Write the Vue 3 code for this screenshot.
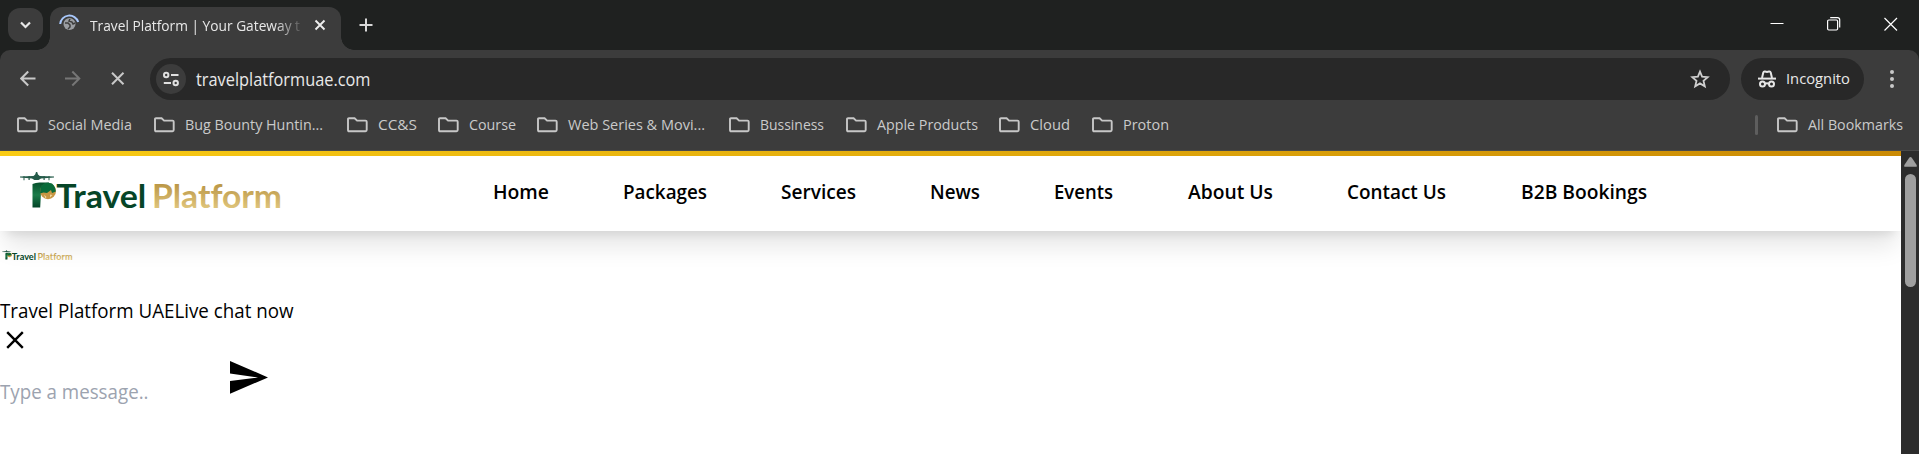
<script setup>
import { h } from 'vue'

// Single-line label fitted to an exact advance width.
const FitText = (props) =>
  h('svg', { width: props.w, height: 24, overflow: 'visible', style: { display: 'block', flex: 'none' } }, [
    h('text', {
      x: 0, y: 18, 'font-size': props.size, fill: 'currentColor',
      textLength: props.w, lengthAdjust: 'spacingAndGlyphs'
    }, props.text)
  ])
FitText.props = ['text', 'w', 'size']

const bookmarks = [
  { name: 'Social Media', w: 84, cell: 137 },
  { name: 'Bug Bounty Huntin...', w: 138, cell: 193 },
  { name: 'CC&S', w: 39, cell: 91 },
  { name: 'Course', w: 47, cell: 99 },
  { name: 'Web Series & Movi...', w: 137, cell: 192 },
  { name: 'Bussiness', w: 64, cell: 117 },
  { name: 'Apple Products', w: 101, cell: 153 },
  { name: 'Cloud', w: 40, cell: 93 },
  { name: 'Proton', w: 46, cell: 100 }
]

const links = [
  { name: 'Home', w: 56, cell: 130 },
  { name: 'Packages', w: 84, cell: 158.5 },
  { name: 'Services', w: 75, cell: 148.5 },
  { name: 'News', w: 50, cell: 124.5 },
  { name: 'Events', w: 59, cell: 134 },
  { name: 'About Us', w: 85, cell: 159 },
  { name: 'Contact Us', w: 99, cell: 173.5 },
  { name: 'B2B Bookings', w: 126, cell: 130 }
]

const logos = [
  { id: 'big', cls: 'logo-big' },
  { id: 'small', cls: 'logo-small' }
]
</script>

<template>
  <div class="browser">
    <header class="tabs">
      <button class="tab-search">
        <svg width="35" height="34" fill="none" stroke="#e8e8e8" stroke-width="2.2"><path d="M13 14.5l4.5 4.5 4.5-4.5" /></svg>
      </button>
      <div class="tab">
        <svg class="favicon" width="22" height="22" viewBox="0 0 22 22">
          <circle cx="10.5" cy="11" r="6" fill="#9a9da2" />
          <path d="M6 10h3l2 2v2l-2 2M11 6l-1 2 3 1 1 2 2-1" fill="none" stroke="#3c3c3c" stroke-width="1.5" />
          <path d="M1.2 11A9.2 9 0 0 1 19.2 9" fill="none" stroke="#a8c7fa" stroke-width="2" />
        </svg>
        <div class="tab-title"><FitText text="Travel Platform | Your Gateway t" :w="210" :size="15" /></div>
        <svg class="tab-close" width="12" height="12" fill="none" stroke="#eee" stroke-width="1.9"><path d="M1.5 1.5l9 9m0-9l-9 9" /></svg>
      </div>
      <svg class="new-tab" width="14" height="14" fill="none" stroke="#d8d8d8" stroke-width="2"><path d="M7 .5v13M.5 7h13" /></svg>
      <div class="window-buttons">
        <svg width="14" height="16" fill="none" stroke="#fff"><path d="M.5 7.5h13" /></svg>
        <svg width="14" height="16" fill="none" stroke="#fff" stroke-width="1.2"><rect x=".6" y="4" width="10" height="10" rx="1.2" /><path d="M3.2 1.6h7.3q2.2 0 2.2 2.2v7.6" /></svg>
        <svg width="14" height="16" fill="none" stroke="#fff" stroke-width="1.2"><path d="M.5 2l12.5 12.5M13 2L.5 14.5" /></svg>
      </div>
    </header>

    <div class="chrome">
      <div class="toolbar">
        <svg class="nav-icons" width="110" height="20" fill="none" stroke="#c8c8c8" stroke-width="2">
          <path d="M15.5 9.5H1.5M8.2 2.5l-7 7 7 7" />
          <path d="M45 9.5h14M52.3 2.5l7 7-7 7" stroke="#767676" />
          <path d="M92 3.7l11.5 11.6m0-11.6L92 15.3" />
        </svg>
        <div class="omnibox">
          <div class="site-info">
            <svg width="18" height="18" fill="none" stroke="#e0e0e0" stroke-width="2">
              <circle cx="4.2" cy="5" r="2.2" /><path d="M9 5h7.5M1.8 13H9" /><circle cx="13.7" cy="13" r="2.2" />
            </svg>
          </div>
          <div class="url"><FitText text="travelplatformuae.com" :w="174.5" :size="17.6" /></div>
          <svg class="star" width="20" height="20" viewBox="0 0 20 20" fill="none" stroke="#cfcfcf" stroke-width="1.8">
            <path d="M10 2.6l2.1 5.1 5.6.5-4.2 3.7 1.3 5.4-4.8-2.9-4.8 2.9 1.3-5.4-4.2-3.7 5.6-.5z" />
          </svg>
        </div>
        <div class="incognito">
          <svg width="18" height="18" fill="none" stroke="#e6e6e6" stroke-width="2">
            <path d="M4 8l1.3-5.4Q5.7 1.2 7 1.5l2 .5 2-.5q1.3-.3 1.7 1.1L14 8" />
            <path d="M0 8.6h18" />
            <circle cx="4.5" cy="14" r="2.5" /><circle cx="13.5" cy="14" r="2.5" /><path d="M7 13.8q2-1.2 4 0" />
          </svg>
          <FitText text="Incognito" :w="64" :size="15" />
        </div>
        <svg class="menu" width="6" height="20" fill="#c8c8c8"><circle cx="3" cy="3" r="2" /><circle cx="3" cy="10" r="2" /><circle cx="3" cy="17" r="2" /></svg>
      </div>

      <div class="bookmarks">
        <div v-for="b in bookmarks" :key="b.name" class="bookmark" :style="{ width: b.cell + 'px' }">
          <svg class="folder" width="21" height="16" fill="none" stroke="#c7c7c7" stroke-width="1.9"><path d="M2 1.2h5.6l2.5 2.4h8.4q1.2 0 1.2 1.2v8.3q0 1.2-1.2 1.2H2.2Q1 14.3 1 13.1V2.2q0-1 1-1z" /></svg>
          <FitText :text="b.name" :w="b.w" :size="15" />
        </div>
        <div class="all">
          <span class="divider"></span>
          <svg class="folder" width="21" height="16" fill="none" stroke="#c7c7c7" stroke-width="1.9"><path d="M2 1.2h5.6l2.5 2.4h8.4q1.2 0 1.2 1.2v8.3q0 1.2-1.2 1.2H2.2Q1 14.3 1 13.1V2.2q0-1 1-1z" /></svg>
          <FitText text="All Bookmarks" :w="95" :size="15" />
        </div>
      </div>
    </div>

    <div class="viewport">
      <main class="page">
        <nav class="site-nav">
          <div class="nav-links">
            <div v-for="l in links" :key="l.name" :style="{ width: l.cell + 'px' }">
              <FitText :text="l.name" :w="l.w" :size="19.5" />
            </div>
          </div>
        </nav>
        <svg v-for="g in logos" :key="g.id" :class="g.cls" viewBox="0 0 264 46">
          <defs>
            <linearGradient :id="g.id + '-gold'" x1="0" y1="0" x2="0" y2="1"><stop offset=".2" stop-color="#b99443" /><stop offset=".85" stop-color="#dfc57c" /></linearGradient>
            <linearGradient :id="g.id + '-green'" x1="0" y1="0" x2="0" y2="1"><stop offset="0" stop-color="#06502c" /><stop offset=".5" stop-color="#1b7b49" /><stop offset="1" stop-color="#034427" /></linearGradient>
          </defs>
          <g fill="#245a49">
            <path d="M0 4.6l13.5-.6 1.7-1.4.8-2.6h1.2l.8 2.6 1.8 1.4 14.2.6v.9l-13 1-2.4 1.6h-4.2l-2.4-1.6L0 5.5z" />
            <path d="M3.5 4h1v4.2h-1zM8.5 4h1.2v4H8.500zM23.500 4h1.2v4h-1.2zM28.500 4h1v4.200h-1z" />
          </g>
          <path d="M12.500 12q3-1.500 7-1.500h9.500v6l-8 4-.8 15H12.500z" :fill="`url(#${g.id}-green)`" />
          <circle cx="28" cy="19.200" r="8" fill="#c79643" />
          <path d="M20.500 15q4-6 11.500-3.500 3.800 3.500 3.800 8l-3.800 1.500-1-3-4 3-3.500-.5-3.500 1z" fill="#0a6b3a" />
          <path d="M24 22.500l2.500 2.500-1 1.500zM30 22.500l2.500.5-2.500 2.500z" fill="#f2d8a0" />
          <text x="36.300" y="35.500" class="wordmark" fill="#064527" textLength="90" lengthAdjust="spacingAndGlyphs">Travel</text>
          <text x="132" y="35.500" class="wordmark" :fill="`url(#${g.id}-gold)`" textLength="130" lengthAdjust="spacingAndGlyphs">Platform</text>
        </svg>
        <section class="chat">
          <FitText text="Travel Platform UAELive chat now" :w="293.5" :size="19.8" />
          <svg class="chat-close" width="18" height="18" fill="none" stroke="#000" stroke-width="2.4"><path d="M1.2 1.2l15.600 15.600m0-15.600L1.200 16.800" /></svg>
          <div class="composer">
            <div class="placeholder"><FitText text="Type a message.." :w="148.5" :size="19.8" /></div>
            <svg class="send" width="38" height="33"><path d="M0 0l38 16.400L0 32.800V20l28-3.600L0 12.600z" /></svg>
          </div>
        </section>
      </main>
      <aside class="scrollbar">
        <svg width="13" height="10" fill="#9f9f9f"><path d="M5.2.7q1.3-1.4 2.6 0l4.700 7q1 2-.8 2.100H1.300Q-.5 9.700.5 7.700z" /></svg>
        <div class="thumb"></div>
      </aside>
    </div>
  </div>
</template>

<style>
body { margin: 0; overflow: hidden; }
</style>

<style scoped>
.browser { width: 1919px; height: 454px; overflow: hidden; display: flex; flex-direction: column; background: #1f2120; font-family: "Open Sans", "Noto Sans", sans-serif; color: #e8e8e8; }
.browser * { box-sizing: border-box; }
svg { display: block; flex: none; }
.tabs { height: 50px; flex: none; display: flex; align-items: flex-start; padding: 7px 21px 0 8px; }
.tab-search { width: 35px; height: 34px; margin-top: 1px; padding: 0; border: 0; border-radius: 12px; background: #3c3c3c; }
.tab { position: relative; width: 291px; height: 43px; margin-left: 7px; padding: 0 14px 0 9px; display: flex; align-items: flex-start; border-radius: 12px 12px 0 0; background: #3c3c3c; }
.tab::before, .tab::after { content: ""; position: absolute; bottom: 0; width: 13px; height: 13px; }
.tab::before { left: -13px; background: radial-gradient(circle at 0 0, transparent 12.5px, #3c3c3c 13px); }
.tab::after { right: -13px; background: radial-gradient(circle at 100% 0, transparent 12.5px, #3c3c3c 13px); }
.favicon { margin-top: 6px; }
.tab-title { width: 212px; height: 30px; margin-left: 9px; padding-top: 6px; mask-image: linear-gradient(to right, #000 185px, transparent 215px); }
.tab-close { margin: 12px 0 0 12px; }
.new-tab { margin: 11px 0 0 18px; }
.window-buttons { display: flex; gap: 43px; margin: 9px 0 0 auto; }
.chrome { height: 101px; flex: none; background: #3c3c3c; border-radius: 10px 10px 0 0; border-bottom: 1px solid #4a4a4a; }
.toolbar { height: 57px; display: flex; align-items: center; padding-left: 20px; }
.omnibox { width: 1580px; height: 42px; margin: 1px 0 0 20px; padding: 0 20px 0 6px; display: flex; align-items: center; border-radius: 21px; background: #282828; }
.site-info { width: 30px; height: 30px; display: grid; place-items: center; border-radius: 50%; background: #3c3c3c; }
.url { margin: 1px 0 0 10px; }
.star { margin-left: auto; }
.incognito { width: 123px; height: 42px; margin-left: 11px; padding-left: 16.5px; display: flex; align-items: center; gap: 10px; border-radius: 21px; background: #282828; }
.incognito svg:last-child { margin-top: -2px; }
.menu { margin-left: 25px; }
.bookmarks { height: 34px; display: flex; align-items: center; padding-left: 17px; }
.bookmark, .all { display: flex; align-items: flex-start; gap: 9.5px; flex: none; color: #cacaca; }
.folder { margin-top: 5px; }
.all { margin: 0 16.5px 0 auto; }
.divider { width: 3px; height: 20px; margin: 3px 10px 0 0; border-radius: 2px; background: #5e5e5e; }
.viewport { flex: 1; display: flex; background: #fff; }
.page { position: relative; width: 1901px; color: #000; overflow: hidden; }
.site-nav { height: 80px; padding: 30px 0 0 492.5px; background: linear-gradient(to right, #facc15, #ca8a04) top / 100% 5px no-repeat, #fff; box-shadow: 0 20px 25px -5px rgba(0, 0, 0, .1), 0 8px 10px -6px rgba(0, 0, 0, .1); font-weight: 600; }
.nav-links { display: flex; }
.wordmark { font-family: Lato, sans-serif; font-size: 33px; font-weight: 700; font-variant-ligatures: none; }
.logo-big, .logo-small { position: absolute; overflow: visible; }
.logo-big { left: 20px; top: 21px; width: 264px; height: 46px; }
.logo-small { left: 2px; top: 99px; width: 71px; height: 12.4px; }
.chat { padding-top: 69px; }
.chat-close { margin: 7px 0 0 6px; }
.composer { display: flex; align-items: flex-start; margin-top: 12px; }
.placeholder { width: 229.5px; padding-top: 20px; color: #9ca3af; }
.scrollbar { width: 18px; display: flex; flex-direction: column; align-items: center; padding-top: 6px; background: #2c2c2c; }
.thumb { width: 11px; height: 113px; margin-top: 7px; border-radius: 6px; background: #9f9f9f; }
</style>
